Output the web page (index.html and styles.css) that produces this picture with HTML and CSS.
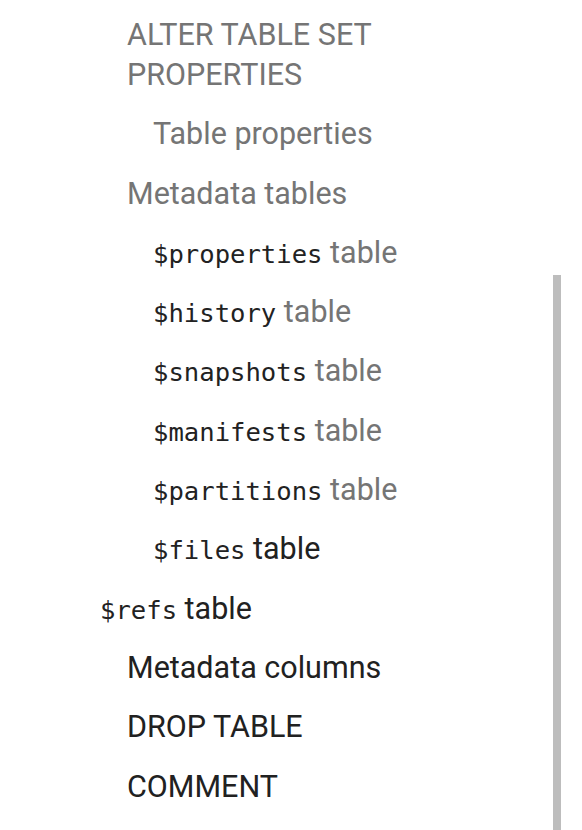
FILE: index.html
```html
<!DOCTYPE html>
<html lang="en">
<head>
<meta charset="utf-8">
<title>Table of contents</title>
<link rel="stylesheet" href="styles.css">
</head>
<body>
<nav class="toc">
  <ul class="list lvl1">
    <li class="item muted">ALTER TABLE SET PROPERTIES
      <ul class="list lvl2">
        <li class="item muted">Table properties</li>
      </ul>
    </li>
    <li class="item muted">Metadata tables
      <ul class="list lvl2">
        <li class="item muted"><code class="mono">$properties</code> table</li>
        <li class="item muted"><code class="mono">$history</code> table</li>
        <li class="item muted"><code class="mono">$snapshots</code> table</li>
        <li class="item muted"><code class="mono">$manifests</code> table</li>
        <li class="item muted"><code class="mono">$partitions</code> table</li>
        <li class="item dark"><code class="mono">$files</code> table</li>
      </ul>
    </li>
  </ul>
  <div class="item dark lvl0"><code class="mono">$refs</code> table</div>
  <ul class="list lvl1">
    <li class="item dark">Metadata columns</li>
    <li class="item dark">DROP TABLE</li>
    <li class="item dark">COMMENT</li>
  </ul>
</nav>
<div class="scroll-thumb"></div>
</body>
</html>
```

FILE: styles.css
```css
html, body {
  margin: 0;
  padding: 0;
  background: #ffffff;
}
body {
  font-family: Roboto, "Noto Sans", sans-serif;
  font-size: 30.5px;
  line-height: 40px;
  color: #212121;
  width: 582px;
  height: 830px;
  overflow: hidden;
  position: relative;
}
.toc {
  padding: 15px 0 0 100px;
  width: 360px;
}
.list {
  list-style: none;
  margin: 0;
  padding: 0;
}
.lvl1 {
  padding-left: 27px;
}
.lvl2 {
  padding-left: 26px;
}
.item {
  margin-top: 19.3px;
}
.toc > .lvl1:first-child > .item:first-child {
  margin-top: 0;
}
.muted {
  color: #757575;
}
.dark {
  color: #212121;
}
.mono {
  font-family: "DejaVu Sans Mono", monospace;
  font-size: 25.6px;
  line-height: 1;
  color: #222222;
}
.scroll-thumb {
  position: absolute;
  left: 553px;
  top: 275px;
  width: 8px;
  height: 555px;
  background: #bdbdbd;
}
```
